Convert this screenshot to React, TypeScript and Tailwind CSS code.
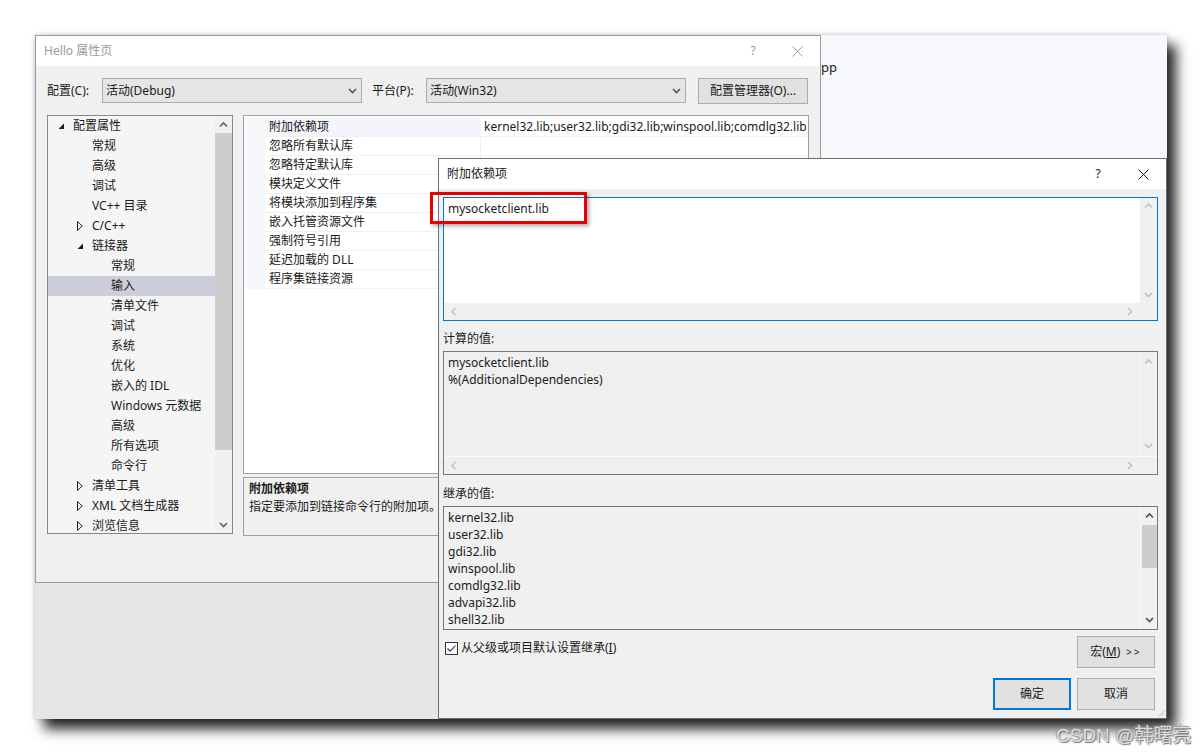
import React from "react";

type Dir = "up" | "down" | "left" | "right";

function Chev({ dir, color = "#c2c2c2" }: { dir: Dir; color?: string }) {
  const d: Record<Dir, string> = {
    up: "M1 5.5 L4.5 2 L8 5.5",
    down: "M1 2 L4.5 5.5 L8 2",
    left: "M5.5 1 L2 4.5 L5.5 8",
    right: "M2 1 L5.5 4.5 L2 8",
  };
  const horiz = dir === "up" || dir === "down";
  return (
    <svg width={horiz ? 9 : 8} height={horiz ? 8 : 9} viewBox={horiz ? "0 0 9 8" : "0 0 8 9"}>
      <path d={d[dir]} stroke={color} strokeWidth="1.6" fill="none" />
    </svg>
  );
}

function CloseX({ color }: { color: string }) {
  return (
    <svg width="11" height="11" viewBox="0 0 11 11">
      <path d="M0.5 0.5 L10.5 10.5 M10.5 0.5 L0.5 10.5" stroke={color} strokeWidth="1" />
    </svg>
  );
}

function Triangle({ open }: { open: boolean }) {
  if (open)
    return (
      <svg width="7" height="7" viewBox="0 0 7 7">
        <path d="M6 0.5 L6 6 L0.5 6 Z" fill="#1e1e1e" />
      </svg>
    );
  return (
    <svg width="6" height="10" viewBox="0 0 6 10">
      <path d="M0.5 0.5 L5.2 5 L0.5 9.5 Z" fill="none" stroke="#1e1e1e" strokeWidth="1" />
    </svg>
  );
}

const TREE: { t: string; l: number; tri?: "open" | "closed"; sel?: boolean }[] = [
  { t: "配置属性", l: 0, tri: "open" },
  { t: "常规", l: 1 },
  { t: "高级", l: 1 },
  { t: "调试", l: 1 },
  { t: "VC++ 目录", l: 1 },
  { t: "C/C++", l: 1, tri: "closed" },
  { t: "链接器", l: 1, tri: "open" },
  { t: "常规", l: 2 },
  { t: "输入", l: 2, sel: true },
  { t: "清单文件", l: 2 },
  { t: "调试", l: 2 },
  { t: "系统", l: 2 },
  { t: "优化", l: 2 },
  { t: "嵌入的 IDL", l: 2 },
  { t: "Windows 元数据", l: 2 },
  { t: "高级", l: 2 },
  { t: "所有选项", l: 2 },
  { t: "命令行", l: 2 },
  { t: "清单工具", l: 1, tri: "closed" },
  { t: "XML 文档生成器", l: 1, tri: "closed" },
  { t: "浏览信息", l: 1, tri: "closed" },
];

const INDENT = ["pl-[8px]", "pl-[27px]", "pl-[46px]"];

const PROPS = [
  "附加依赖项",
  "忽略所有默认库",
  "忽略特定默认库",
  "模块定义文件",
  "将模块添加到程序集",
  "嵌入托管资源文件",
  "强制符号引用",
  "延迟加载的 DLL",
  "程序集链接资源",
];

const INHERITED = [
  "kernel32.lib",
  "user32.lib",
  "gdi32.lib",
  "winspool.lib",
  "comdlg32.lib",
  "advapi32.lib",
  "shell32.lib",
];

function PropertyPages() {
  return (
    <div className="absolute left-0 top-0 w-[786px] h-[548px] border border-[#9b9b9b] bg-[#f0f0f0] flex flex-col">
      {/* title bar */}
      <div className="h-[30px] bg-white flex items-center pl-[8px] text-[#9a9a9a]">
        <span className="flex-1">Hello 属性页</span>
        <span className="w-[10px] text-center mr-[34px]">?</span>
        <span className="mr-[17px] flex">
          <CloseX color="#9a9a9a" />
        </span>
      </div>

      <div className="flex-1 pl-[11px] pt-[11px]">
        {/* config row */}
        <div className="flex items-center h-[26px] pt-[1px]">
          <span className="w-[55px]">配置(C):</span>
          <div className="w-[260px] h-[25px] bg-[#e5e5e5] border border-[#acacac] flex items-center pl-[3px] pr-[4px]">
            <span className="flex-1">活动(Debug)</span>
            <Chev dir="down" color="#555" />
          </div>
          <span className="w-[54px] ml-[10px]">平台(P):</span>
          <div className="w-[260px] h-[25px] bg-[#e5e5e5] border border-[#acacac] flex items-center pl-[3px] pr-[4px]">
            <span className="flex-1">活动(Win32)</span>
            <Chev dir="down" color="#555" />
          </div>
          <div className="ml-[12px] w-[110px] h-[26px] bg-[#e1e1e1] border border-[#adadad] flex items-center justify-center">
            配置管理器(O)...
          </div>
        </div>

        <div className="flex mt-[12px] gap-[10px]">
          {/* tree */}
          <div className="w-[186px] h-[419px] border border-[#828790] bg-[#f5f5f5] flex overflow-hidden">
            <div className="flex-1 flex flex-col">
              {TREE.map((n, i) => (
                <div
                  key={i}
                  className={`h-[20px] shrink-0 flex items-center ${INDENT[n.l]} ${n.sel ? "bg-[#cccedb]" : ""}`}
                >
                  <span className="w-[17px] flex items-center pl-[2px]">
                    {n.tri ? <Triangle open={n.tri === "open"} /> : null}
                  </span>
                  <span className="whitespace-nowrap">{n.t}</span>
                </div>
              ))}
            </div>
            <div className="w-[17px] bg-[#f0f0f0] flex flex-col items-center">
              <div className="h-[17px] flex items-center justify-center">
                <Chev dir="up" color="#606060" />
              </div>
              <div className="w-[17px] h-[317px] bg-[#cdcdcd]" />
              <div className="flex-1" />
              <div className="h-[17px] flex items-center justify-center">
                <Chev dir="down" color="#606060" />
              </div>
            </div>
          </div>

          {/* grid + description */}
          <div className="w-[566px] flex flex-col">
            <div className="h-[359px] border border-[#a0a0a0] bg-white flex flex-col pt-[2px]">
              {PROPS.map((p, i) => (
                <div key={i} className="h-[19px] flex">
                  <div className="w-[21px] bg-[#f5f7fb]" />
                  <div
                    className={`w-[215px] flex items-center pl-[4px] border-b border-[#f0f0f0] ${
                      i === 0 ? "bg-[#f3f5fa]" : ""
                    }`}
                  >
                    {p}
                  </div>
                  <div className="flex-1 flex items-center pl-[3px] border-l border-b border-[#f0f0f0] overflow-hidden whitespace-nowrap">
                    {i === 0 ? "kernel32.lib;user32.lib;gdi32.lib;winspool.lib;comdlg32.lib" : ""}
                  </div>
                </div>
              ))}
            </div>
            <div className="mt-[3px] h-[59px] border border-[#a0a0a0] bg-[#f0f0f0] pl-[5px] pt-[2px] leading-[18px]">
              <div className="font-bold">附加依赖项</div>
              <div>指定要添加到链接命令行的附加项。</div>
            </div>
          </div>
        </div>
      </div>
    </div>
  );
}

function AdditionalDeps() {
  return (
    <div className="absolute left-[403px] top-[123px] w-[729px] h-[561px] border border-[#6f6f6f] bg-[#f0f0f0] flex flex-col">
      {/* highlight marker */}
      <div className="absolute left-[-9px] top-[33px] w-[157px] h-[32px] border-[3px] border-[#e60000] shadow-[2px_2px_4px_rgba(0,0,0,0.35)] z-10" />

      <div className="h-[30px] bg-white flex items-center pl-[8px]">
        <span className="flex-1">附加依赖项</span>
        <span className="w-[10px] text-center mr-[35px]">?</span>
        <span className="mr-[17px] flex">
          <CloseX color="#1e1e1e" />
        </span>
      </div>

      <div className="flex-1 flex flex-col pl-[4px] pr-[8px] pt-[8px]">
        {/* editable */}
        <div className="h-[124px] border border-[#0078d7] bg-white flex flex-col">
          <div className="flex-1 flex">
            <div className="flex-1 pl-[4px] pt-[2px] leading-[17px]">mysocketclient.lib</div>
            <div className="w-[17px] bg-[#f0f0f0] flex flex-col items-center justify-between py-[4px]">
              <Chev dir="up" />
              <Chev dir="down" />
            </div>
          </div>
          <div className="h-[17px] bg-[#f0f0f0] flex items-center justify-between pl-[6px] pr-[23px]">
            <Chev dir="left" />
            <Chev dir="right" />
          </div>
        </div>

        <div className="h-[30px] pt-[9px] leading-[17px]">计算的值:</div>
        <div className="h-[124px] border border-[#7a7a7a] bg-[#efefef] flex flex-col">
          <div className="flex-1 flex">
            <div className="flex-1 pl-[4px] pt-[2px] leading-[17px] border-r border-b border-[#fafafa]">
              <div>mysocketclient.lib</div>
              <div>%(AdditionalDependencies)</div>
            </div>
            <div className="w-[17px] flex flex-col items-center justify-between py-[6px] border-b border-[#fafafa]">
              <Chev dir="up" />
              <Chev dir="down" />
            </div>
          </div>
          <div className="h-[17px] flex items-center justify-between pl-[6px] pr-[23px]">
            <Chev dir="left" />
            <Chev dir="right" />
          </div>
        </div>

        <div className="h-[31px] pt-[10px] leading-[17px]">继承的值:</div>
        <div className="h-[124px] border border-[#7a7a7a] bg-[#f0f0f0] flex">
          <div className="flex-1 pl-[4px] pt-[2px] leading-[17px] overflow-hidden">
            {INHERITED.map((l) => (
              <div key={l}>{l}</div>
            ))}
          </div>
          <div className="w-[17px] flex flex-col items-center border-l border-[#fafafa]">
            <div className="h-[18px] flex items-center justify-center">
              <Chev dir="up" color="#505050" />
            </div>
            <div className="w-[15px] h-[43px] bg-[#cdcdcd]" />
            <div className="flex-1" />
            <div className="h-[18px] flex items-center justify-center">
              <Chev dir="down" color="#505050" />
            </div>
          </div>
        </div>

        <div className="flex justify-between items-start mt-[6px] pr-[3px]">
          <div className="flex items-center mt-[4px] ml-[2px]">
            <div className="w-[13px] h-[13px] border border-[#333] bg-white flex items-center justify-center">
              <svg width="11" height="11" viewBox="0 0 11 11">
                <path d="M1.5 5.5 L4.2 8.2 L9.5 2.5" stroke="#333" strokeWidth="1.1" fill="none" />
              </svg>
            </div>
            <span className="ml-[3px]">
              从父级或项目默认设置继承(<span className="underline">I</span>)
            </span>
          </div>
          <div className="w-[78px] h-[32px] bg-[#e1e1e1] border border-[#adadad] flex items-center justify-center">
            宏(<span className="underline">M</span>)<span className="ml-[6px] text-[10px] tracking-[2px]">&gt;&gt;</span>
          </div>
        </div>

        <div className="flex justify-end gap-[6px] mt-[10px] pr-[3px]">
          <div className="w-[78px] h-[32px] bg-[#e1e1e1] border-2 border-[#0078d7] flex items-center justify-center">
            确定
          </div>
          <div className="w-[78px] h-[32px] bg-[#e1e1e1] border border-[#adadad] flex items-center justify-center">
            取消
          </div>
        </div>
      </div>

      <svg className="absolute right-[1px] bottom-[1px]" width="7" height="7" viewBox="0 0 7 7">
        <path d="M6 1 L1 6 M6 4 L4 6" stroke="#bcbcbc" strokeWidth="1" />
      </svg>
    </div>
  );
}

export default function App() {
  return (
    <div className="relative w-[1203px] h-[754px] bg-white overflow-hidden text-[12px] leading-[16px] text-[#1a1a1a] font-['Noto_Sans','Noto_Sans_CJK_SC',sans-serif]">
      <div className="absolute left-[35px] top-[35px] w-[1132px] h-[684px] bg-[#e5e6e8] shadow-[9px_10px_12px_rgba(0,0,0,0.85),0_0_5px_rgba(0,0,0,0.2)]">
        {/* editor behind the dialogs */}
        <div className="absolute left-[786px] top-0 w-[346px] h-[123px] bg-[#f7f8fc] pt-[24px] text-[13px]">pp</div>
        <PropertyPages />
        <AdditionalDeps />
      </div>

      <div className="absolute left-[1056px] top-[724px] text-[19px] leading-[24px] text-[#dcdcdc] [text-shadow:1px_1px_1px_#6f6f6f,-1px_-1px_1px_#9a9a9a] font-['Liberation_Sans','Noto_Sans_CJK_SC',sans-serif]">
        CSDN @韩曙亮
      </div>
    </div>
  );
}
